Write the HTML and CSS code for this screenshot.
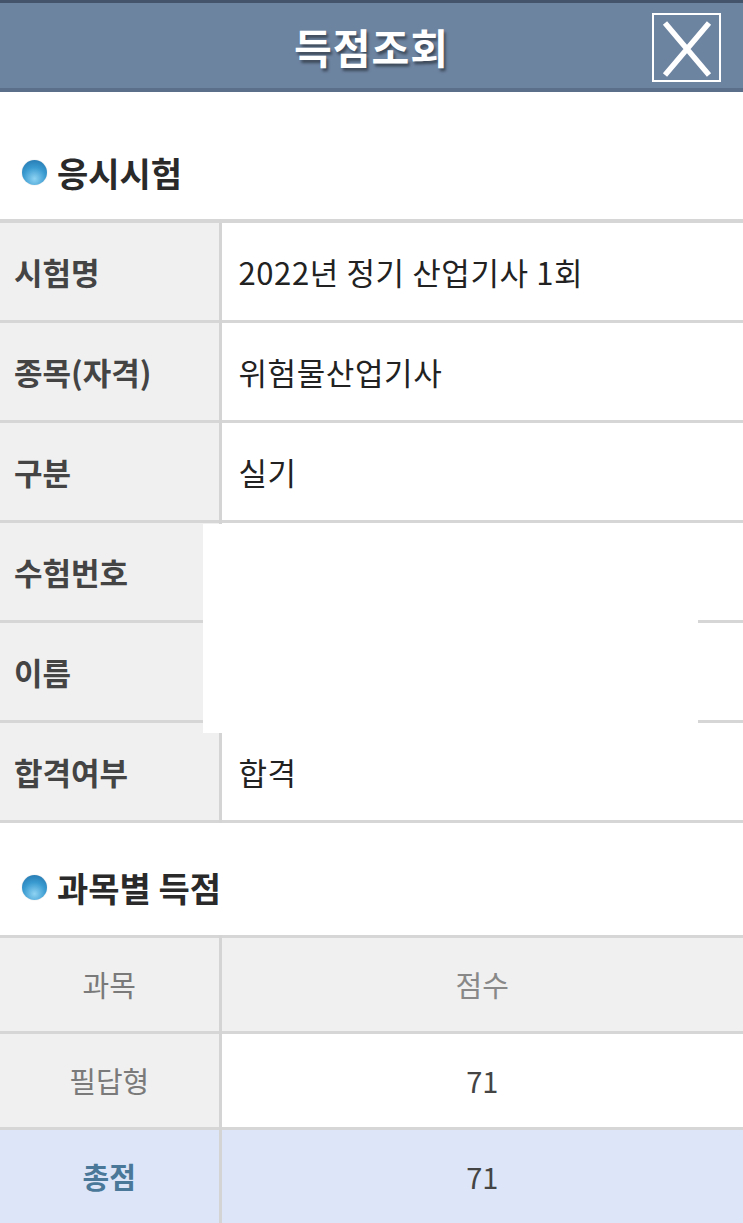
FILE: index.html
```html
<!doctype html>
<html>
<head>
    <title>득점조회</title>
    <meta charset="utf-8">
    <link rel="stylesheet" href="styles.css">
</head>
<body>
    <header class="top-bar">
        <h1>득점조회</h1>
        <button class="btn-close" type="button" aria-label="닫기">
            <svg width="64" height="64" viewBox="0 0 64 64">
                <path d="M10 7 L54 59 M54 7 L10 59" stroke="#fff" stroke-width="5.5" fill="none"/>
            </svg>
        </button>
    </header>

    <section class="block">
        <h2 class="block-title"><span class="dot"></span>응시시험</h2>
        <div class="info-wrap">
            <table class="info">
                <tr><th>시험명</th><td>2022년 정기 산업기사 1회</td></tr>
                <tr><th>종목(자격)</th><td>위험물산업기사</td></tr>
                <tr><th>구분</th><td>실기</td></tr>
                <tr><th>수험번호</th><td></td></tr>
                <tr><th>이름</th><td></td></tr>
                <tr><th>합격여부</th><td>합격</td></tr>
            </table>
            <div class="mask"></div>
        </div>
    </section>

    <section class="block block-score">
        <h2 class="block-title"><span class="dot"></span>과목별 득점</h2>
        <table class="score">
            <tr class="head"><th>과목</th><td>점수</td></tr>
            <tr><th>필답형</th><td>71</td></tr>
            <tr class="total"><th>총점</th><td>71</td></tr>
        </table>
    </section>
</body>
</html>
```

FILE: styles.css
```css
* {
    margin: 0;
    padding: 0;
    box-sizing: border-box;
}

body {
    background: #ffffff;
    font-family: "Noto Sans CJK KR", "Noto Sans", sans-serif;
    color: #222;
}

.top-bar {
    height: 92px;
    background: #6d84a1;
    border-top: 3px solid #44546b;
    border-bottom: 4px solid #5b6f8b;
    display: flex;
    align-items: center;
    justify-content: center;
    position: relative;
}

.top-bar h1 {
    color: #fff;
    font-size: 41px;
    font-weight: bold;
    letter-spacing: 1px;
    text-shadow: 2px 3px 3px rgba(0, 0, 0, 0.45);
}

.btn-close {
    position: absolute;
    right: 22px;
    top: 10px;
    width: 69px;
    height: 69px;
    border: 2px solid #fff;
    background: transparent;
    display: flex;
    align-items: center;
    justify-content: center;
}

.block-title {
    display: flex;
    align-items: center;
    gap: 10px;
    height: 127px;
    padding-left: 22px;
    padding-top: 33px;
    font-size: 34px;
    font-weight: bold;
    color: #2a2a2a;
}

.block-score .block-title {
    height: 112px;
    padding-top: 18px;
}

.dot {
    width: 25px;
    height: 25px;
    flex-shrink: 0;
    border-radius: 50%;
    background: radial-gradient(circle at 50% 75%, #8fd3f3 0%, #3a9bd0 50%, #1f6fa8 100%);
    box-shadow: 0 0 1px rgba(0, 0, 0, 0.3);
}

table {
    width: 100%;
    border-collapse: collapse;
}

.info-wrap {
    position: relative;
}

.info {
    border-top: 4px solid #d6d6d6;
}

.info tr {
    height: 100px;
    border-bottom: 3px solid #d6d6d6;
}

.info th {
    width: 220px;
    background: #f0f0f0;
    border-right: 3px solid #d4d4d4;
    text-align: left;
    padding-left: 14px;
    font-size: 31px;
    font-weight: bold;
    color: #444;
}

.info td {
    padding-left: 17px;
    font-size: 31px;
    letter-spacing: 0.6px;
    color: #222;
}

.mask {
    position: absolute;
    left: 203px;
    top: 305px;
    width: 495px;
    height: 209px;
    background: #fff;
}

.score tr {
    height: 96px;
    border-bottom: 3px solid #d6d6d6;
}

.score .head {
    border-top: 3px solid #d6d6d6;
    background: #f0f0f0;
}

.score th,
.score td {
    text-align: center;
    font-size: 29px;
    font-weight: normal;
}

.score th {
    width: 220px;
    background: #f0f0f0;
    border-right: 3px solid #d4d4d4;
    color: #7a7a7a;
}

.score td {
    color: #444;
}

.score .head td {
    color: #888;
}

.score .total {
    background: #dce6f8;
}

.score .total th {
    background: #dce6f8;
    color: #4a7898;
    font-weight: bold;
}
```
